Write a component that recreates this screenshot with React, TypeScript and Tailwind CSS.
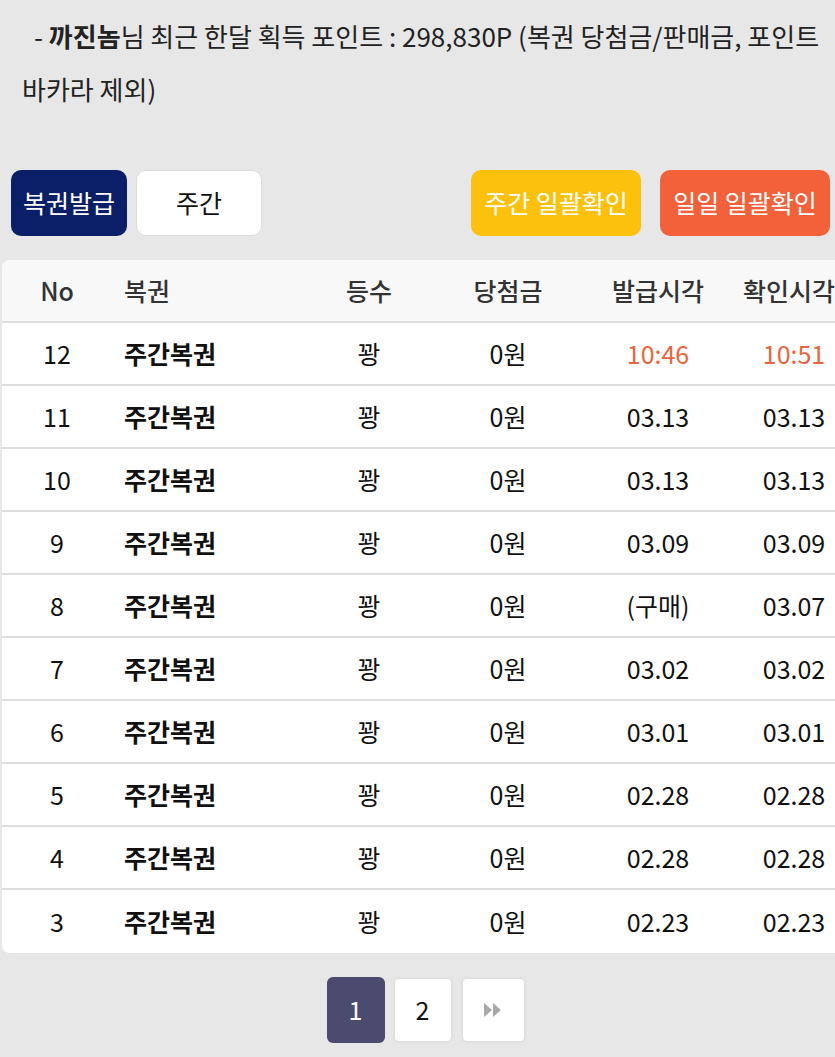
import React from "react";

const rows = [
  { no: 12, a: "10:46", b: "10:51", hi: true },
  { no: 11, a: "03.13", b: "03.13" },
  { no: 10, a: "03.13", b: "03.13" },
  { no: 9, a: "03.09", b: "03.09" },
  { no: 8, a: "(구매)", b: "03.07" },
  { no: 7, a: "03.02", b: "03.02" },
  { no: 6, a: "03.01", b: "03.01" },
  { no: 5, a: "02.28", b: "02.28" },
  { no: 4, a: "02.28", b: "02.28" },
  { no: 3, a: "02.23", b: "02.23" },
];

const grid = "grid grid-cols-[110px_188px_138px_140px_160px_112px] items-center";

export default function App() {
  return (
    <div
      className="w-[835px] h-[1057px] overflow-hidden bg-[#e7e7e7] text-[#111]"
      style={{ fontFamily: '"Noto Sans CJK KR", "Noto Sans", sans-serif' }}
    >
      <div className="w-[848px] ml-[2px]">
        <div className="pt-[9px] pl-[20px] text-[26px] leading-[53px] text-[#222]">
          <div className="whitespace-nowrap pl-[12px]">
            - <span className="font-bold">까진놈</span>님 최근 한달 획득 포인트 : 298,830P (복권 당첨금/판매금, 포인트
          </div>
          <div className="whitespace-nowrap">바카라 제외)</div>
        </div>

        <div className="mt-[55px] flex items-center pl-[9px] w-[828px]">
          <div className="w-[116px] h-[66px] rounded-[10px] bg-[#0b1f69] text-white text-[25px] flex items-center justify-center">
            복권발급
          </div>
          <div className="ml-[9px] w-[126px] h-[66px] rounded-[10px] bg-white border border-[#dcdcdc] text-[25px] flex items-center justify-center">
            주간
          </div>
          <div className="ml-auto w-[170px] h-[66px] rounded-[10px] bg-[#fcc10c] text-white text-[25px] flex items-center justify-center">
            주간 일괄확인
          </div>
          <div className="ml-[19px] w-[170px] h-[66px] rounded-[10px] bg-[#f2613a] text-white text-[25px] flex items-center justify-center">
            일일 일괄확인
          </div>
        </div>

        <div className="mt-[24px] bg-white rounded-[8px] overflow-hidden text-[25px]">
          <div className={`${grid} h-[63px] bg-[#f8f8f8] border-b-2 border-[#dedede] text-[#333] font-medium`}>
            <div className="text-center">No</div>
            <div className="pl-[12px]">복권</div>
            <div className="text-center">등수</div>
            <div className="text-center">당첨금</div>
            <div className="text-center">발급시각</div>
            <div className="pl-[5px] whitespace-nowrap">확인시각</div>
          </div>
          {rows.map((r, i) => (
            <div
              key={r.no}
              className={`${grid} h-[63px] ${i < rows.length - 1 ? "border-b-2 border-[#dedede]" : ""}`}
            >
              <div className="text-center">{r.no}</div>
              <div className="pl-[12px] font-bold">주간복권</div>
              <div className="text-center">꽝</div>
              <div className="text-center">0원</div>
              <div className={`text-center ${r.hi ? "text-[#e8643c]" : ""}`}>{r.a}</div>
              <div className={`text-center ${r.hi ? "text-[#e8643c]" : ""}`}>{r.b}</div>
            </div>
          ))}
        </div>

        <div className="mt-[24px] flex justify-center gap-[8px] text-[25px]">
          <div className="w-[58px] h-[66px] rounded-[6px] bg-[#4b4b6f] text-white flex items-center justify-center">
            1
          </div>
          <div className="w-[60px] h-[66px] rounded-[6px] bg-white border-2 border-[#e0e0e0] flex items-center justify-center">
            2
          </div>
          <div className="w-[65px] h-[66px] rounded-[6px] bg-white border-2 border-[#e0e0e0] flex items-center justify-center">
            <svg width="20" height="16" viewBox="0 0 20 16">
              <path d="M1 1 L9 8 L1 15 Z" fill="#a8a8a8" />
              <path d="M10 1 L18 8 L10 15 Z" fill="#a8a8a8" />
            </svg>
          </div>
        </div>
      </div>
    </div>
  );
}
